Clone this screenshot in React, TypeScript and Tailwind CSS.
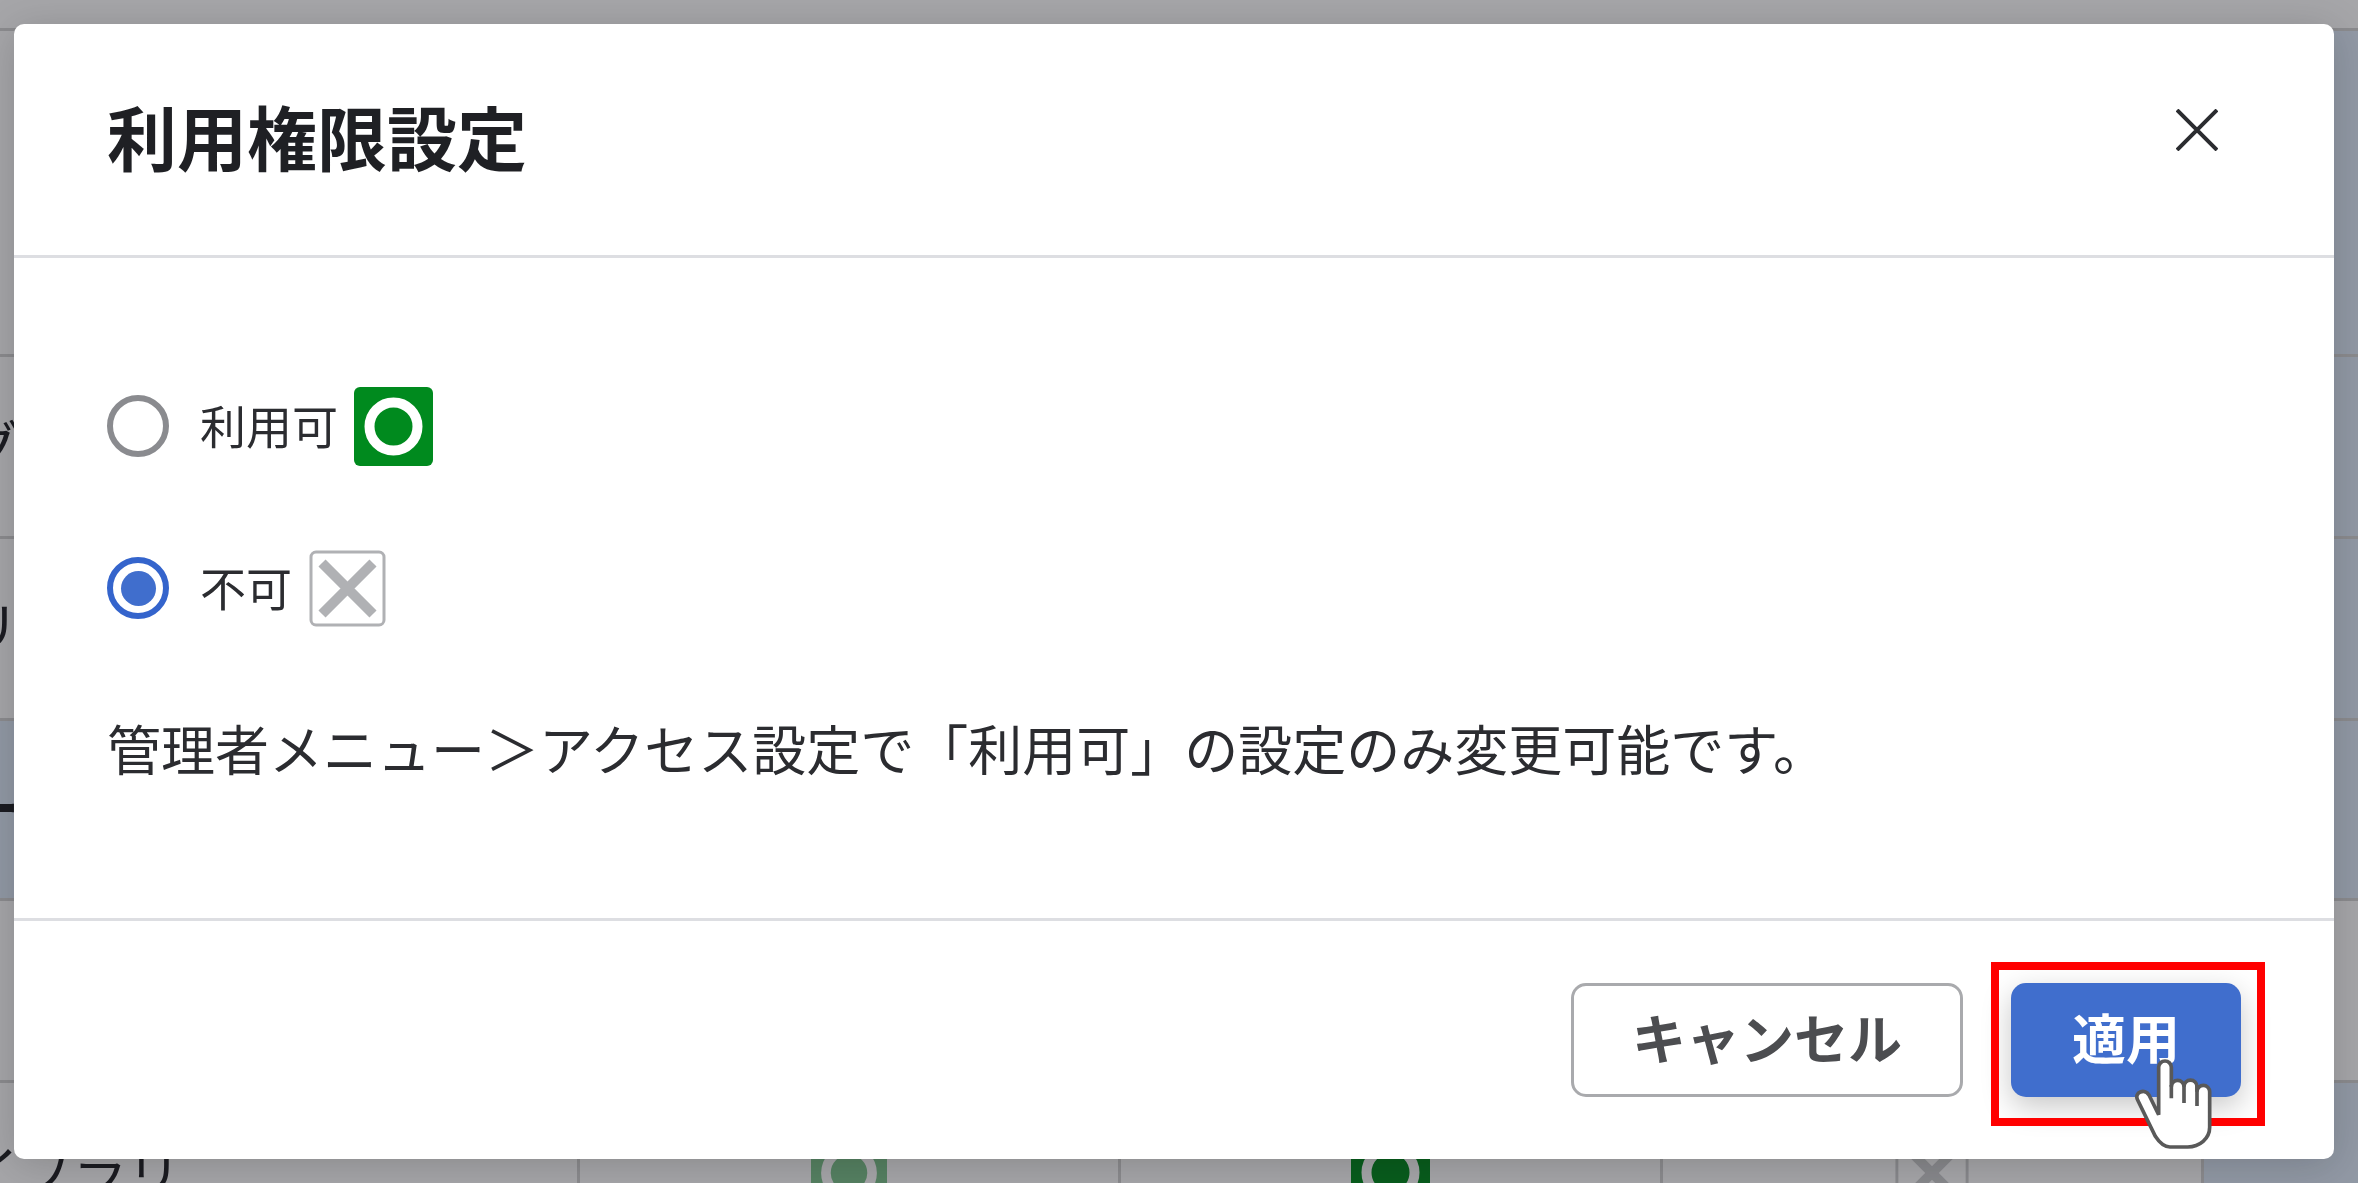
import React, { useState } from 'react';

type Status = 'allowed' | 'inherited' | 'denied';

const AllowedIcon = ({ faded = false }: { faded?: boolean }) => (
  <svg viewBox="0 0 79 79" className={faded ? 'size-[76px] opacity-50' : 'size-[79px]'} aria-hidden="true">
    <rect width="79" height="79" rx="6" fill="#008a1e" />
    <circle cx="39.5" cy="39.5" r="24" fill="none" stroke="#fff" strokeWidth="10" />
  </svg>
);

const DeniedIcon = ({ faded = false }: { faded?: boolean }) => (
  <svg viewBox="0 0 79 79" className={faded ? 'size-[76px] opacity-60' : 'size-[79px]'} aria-hidden="true">
    <rect x="3" y="3" width="73" height="73" rx="5" fill="#fff" stroke="#b0b1b4" strokeWidth="3" />
    <path d="M14 14 65 65M65 14 14 65" stroke="#b0b1b4" strokeWidth="10" />
  </svg>
);

const CloseIcon = () => (
  <svg viewBox="0 0 42 42" className="size-[42px]" fill="none" stroke="#2b2c30" strokeWidth="4" aria-hidden="true">
    <path d="M1 1 41 41M41 1 1 41" />
  </svg>
);

const HandPointer = () => (
  <svg
    viewBox="105 87 231 270"
    className="pointer-events-none absolute top-[76px] left-[124px] h-[90px] w-[77px]"
    fill="#fff"
    stroke="#595959"
    strokeWidth="11"
    aria-hidden="true"
  >
    <path d="M176 254V112a19 19 0 0 1 38 0v58a19 19 0 0 1 38 0a19 19 0 0 1 39 0v15a19 19 0 0 1 38 0V292c0 34-30 59-66 59h-53c-17 0-31-12-44-32L113 210c-12-23 22-36 34-15z" />
    <path d="M214 165v40M252 166v53M291 166v62" fill="none" />
  </svg>
);

const rows: { name: string; group?: boolean; last?: boolean; cells?: Status[] }[] = [
  { name: 'ログ', last: true },
  { name: 'クリップ', last: true },
  { name: 'メール', group: true, last: true },
  { name: '' },
  { name: 'ライブラリ', last: true, cells: ['inherited', 'allowed', 'denied'] },
];

const StatusCell = ({ status }: { status?: Status }) => (
  <td className="border-3 border-[#d4d4d4] p-0">
    <div className="flex justify-center">
      {status === 'allowed' && <AllowedIcon />}
      {status === 'inherited' && <AllowedIcon faded />}
      {status === 'denied' && <DeniedIcon faded />}
    </div>
  </td>
);

const PermissionTable = () => (
  <table className="-ml-[152px] mt-7 w-[calc(100%+300px)] table-fixed border-collapse text-[54px] text-[#1f2024]">
    <colgroup>
      <col className="w-[729px]" />
      <col className="w-[541px]" />
      <col className="w-[542px]" />
      <col className="w-[541px]" />
      <col />
    </colgroup>
    <thead>
      <tr className="h-[326px]">
        <th className="border-3 border-[#d4d4d4]" colSpan={4} />
        <th className="border-3 border-[#d4d4d4] bg-[#deeaf9]" />
      </tr>
    </thead>
    <tbody>
      {rows.map((row) => (
        <tr key={row.name} className={row.group ? 'h-[180px] bg-[#deeaf9]' : 'h-[182px]'}>
          <th
            scope="row"
            className={`border-3 border-[#d4d4d4] pt-0 pb-2 pl-[60px] text-left leading-[60px] ${
              row.group ? 'font-bold' : 'font-normal'
            }`}
          >
            {row.name}
          </th>
          <StatusCell status={row.cells?.[0]} />
          <StatusCell status={row.cells?.[1]} />
          <StatusCell status={row.cells?.[2]} />
          <td className={`border-3 border-[#d4d4d4] ${row.last ? 'bg-[#deeaf9]' : ''}`} />
        </tr>
      ))}
    </tbody>
  </table>
);

const radioClass =
  "grid size-[62px] shrink-0 appearance-none place-content-center rounded-full border-[6px] border-[#8a8b8f] bg-white checked:border-[#3464cc] checked:before:size-[35px] checked:before:rounded-full checked:before:bg-[#406ecd] checked:before:content-['']";

const App = () => {
  const [permission, setPermission] = useState('denied');

  return (
    <div className="h-screen overflow-hidden bg-white font-['Noto_Sans_CJK_JP',sans-serif]">
      <PermissionTable />

      <div className="fixed inset-0 flex items-start bg-[rgba(20,22,30,0.38)] pt-6 pr-6 pl-[14px]">
        <section
          role="dialog"
          aria-modal="true"
          aria-labelledby="dialog-title"
          className="flex-1 rounded-[10px] bg-white text-[#2b2c30] shadow-[0_6px_40px_rgba(0,0,0,0.18)]"
        >
          <header className="flex items-start justify-between border-b-3 border-[#dddee2] pt-[76px] pr-[107px] pb-[84px] pl-[93px]">
            <h1 id="dialog-title" className="text-[70px] leading-[71px] font-bold text-[#1f2024]">
              利用権限設定
            </h1>
            <button type="button" aria-label="閉じる" className="grid size-15 place-items-center">
              <CloseIcon />
            </button>
          </header>

          <div className="flex flex-col items-start gap-[82px] px-[93px] py-32">
            <label className="flex h-20 items-center text-[46px]">
              <input
                type="radio"
                name="permission"
                className={radioClass}
                checked={permission === 'allowed'}
                onChange={() => setPermission('allowed')}
              />
              <span className="mr-4 ml-[31px] pb-1">利用可</span>
              <AllowedIcon />
            </label>
            <label className="flex h-20 items-center text-[46px]">
              <input
                type="radio"
                name="permission"
                className={radioClass}
                checked={permission === 'denied'}
                onChange={() => setPermission('denied')}
              />
              <span className="mr-4 ml-[31px] pb-1">不可</span>
              <DeniedIcon />
            </label>
            <p className="h-20 text-[54px] leading-[76px]">
              管理者メニュー＞アクセス設定で「利用可」の設定のみ変更可能です。
            </p>
          </div>

          <footer className="flex justify-end gap-12 border-t-3 border-[#dddee2] py-[62px] pr-[93px] text-[54px] font-bold">
            <button
              type="button"
              className="h-[114px] rounded-[15px] border-3 border-[#a9aaad] bg-white px-[58px] pb-2 text-[#4c4d50]"
            >
              キャンセル
            </button>
            <div className="relative">
              <button
                type="button"
                className="h-[114px] rounded-[15px] bg-[#406ecd] px-[61px] pb-2 text-white shadow-[0_10px_30px_rgba(0,0,0,0.22)]"
              >
                適用
              </button>
              <div className="pointer-events-none absolute -top-[21px] -right-6 -bottom-[29px] -left-5 border-8 border-[#ff0000]" />
              <HandPointer />
            </div>
          </footer>
        </section>
      </div>
    </div>
  );
};

export default App;
